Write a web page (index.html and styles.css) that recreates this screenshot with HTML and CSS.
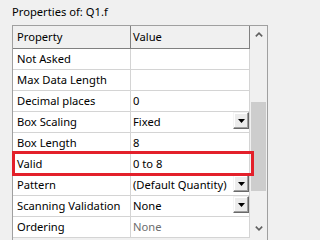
FILE: index.html
```html
<!DOCTYPE html>
<html>
<head>
<meta charset="utf-8">
<link rel="stylesheet" href="styles.css">
</head>
<body>
<div class="title">Properties of: Q1.f</div>
<div class="grid">
  <div class="table">
    <div class="row head"><div class="c1">Property</div><div class="c2">Value</div></div>
    <div class="row"><div class="c1">Not Asked</div><div class="c2"></div></div>
    <div class="row"><div class="c1">Max Data Length</div><div class="c2"></div></div>
    <div class="row"><div class="c1">Decimal places</div><div class="c2">0</div></div>
    <div class="row"><div class="c1">Box Scaling</div><div class="c2 combo"><span>Fixed</span><span class="drop"><svg width="7" height="4" viewBox="0 0 7 4"><polygon points="0,0 7,0 3.5,4" fill="#000"/></svg></span></div></div>
    <div class="row"><div class="c1">Box Length</div><div class="c2">8</div></div>
    <div class="row"><div class="c1">Valid</div><div class="c2">0 to 8</div></div>
    <div class="row"><div class="c1">Pattern</div><div class="c2 combo"><span>(Default Quantity)</span><span class="drop"><svg width="7" height="4" viewBox="0 0 7 4"><polygon points="0,0 7,0 3.5,4" fill="#000"/></svg></span></div></div>
    <div class="row"><div class="c1">Scanning Validation</div><div class="c2 combo"><span>None</span><span class="drop"><svg width="7" height="4" viewBox="0 0 7 4"><polygon points="0,0 7,0 3.5,4" fill="#000"/></svg></span></div></div>
    <div class="row"><div class="c1">Ordering</div><div class="c2 muted">None</div></div>
  </div>
  <div class="scroll">
    <div class="sbtn"><svg width="8" height="5" viewBox="0 0 8 5"><polyline points="0.8,4.4 4,1.2 7.2,4.4" fill="none" stroke="#606060" stroke-width="1.6"/></svg></div>
    <div class="thumb"></div>
    <div class="sbtn down"><svg width="8" height="5" viewBox="0 0 8 5"><polyline points="0.8,0.6 4,3.8 7.2,0.6" fill="none" stroke="#606060" stroke-width="1.6"/></svg></div>
  </div>
  <div class="highlight"></div>
</div>
</body>
</html>
```
FILE: styles.css
```css
* { box-sizing: border-box; }
html, body { margin: 0; }
body {
  background: #f0f0f0;
  font-family: "Noto Sans", sans-serif;
  font-size: 11.2px;
  color: #000;
  width: 280px;
  height: 240px;
  overflow: hidden;
}
.title {
  height: 25px;
  padding: 3px 0 0 12px;
  line-height: 17px;
}
.grid {
  position: relative;
  margin-left: 12px;
  width: 256px;
  height: 220px;
  border: 1px solid #a0a0a0;
  border-bottom: none;
  display: flex;
  align-items: flex-start;
}
.table { width: 237px; }
.row {
  display: flex;
  height: 21px;
  border-bottom: 1px solid #d4d4d4;
  background: #fff;
}
.row.head {
  height: 23px;
  background: #f0f0f0;
  border-bottom-color: #808080;
}
.c1, .c2 {
  line-height: 20px;
  white-space: nowrap;
  overflow: hidden;
}
.c1 {
  width: 118px;
  padding-left: 4px;
  border-right: 1px solid #d4d4d4;
}
.c2 {
  width: 119px;
  padding-left: 2px;
  border-right: 1px solid #d4d4d4;
}
.head .c1, .head .c2 {
  line-height: 22px;
  border-right-color: #808080;
}
.combo {
  display: flex;
  justify-content: space-between;
  align-items: flex-start;
}
.muted { color: #6d6d6d; }
.drop {
  width: 16px;
  height: 17px;
  display: flex;
  align-items: center;
  justify-content: center;
  background: #ececec;
  border: 1px solid;
  border-color: #f4f4f4 #696969 #696969 #f4f4f4;
  box-shadow: inset -1px -1px 0 #a0a0a0, inset 1px 1px 0 #fff;
}
.scroll {
  width: 17px;
  height: 211px;
  display: flex;
  flex-direction: column;
  align-items: center;
  background: #f0f0f0;
}
.sbtn {
  width: 17px;
  height: 17px;
  display: flex;
  align-items: center;
  justify-content: center;
}
.sbtn.down { margin-top: auto; }
.thumb {
  width: 15px;
  height: 89px;
  margin-top: 59px;
  background: #cdcdcd;
}
.highlight {
  position: absolute;
  left: -1px;
  top: 125px;
  width: 242px;
  height: 25px;
  border: 3px solid #e3202a;
}
```
